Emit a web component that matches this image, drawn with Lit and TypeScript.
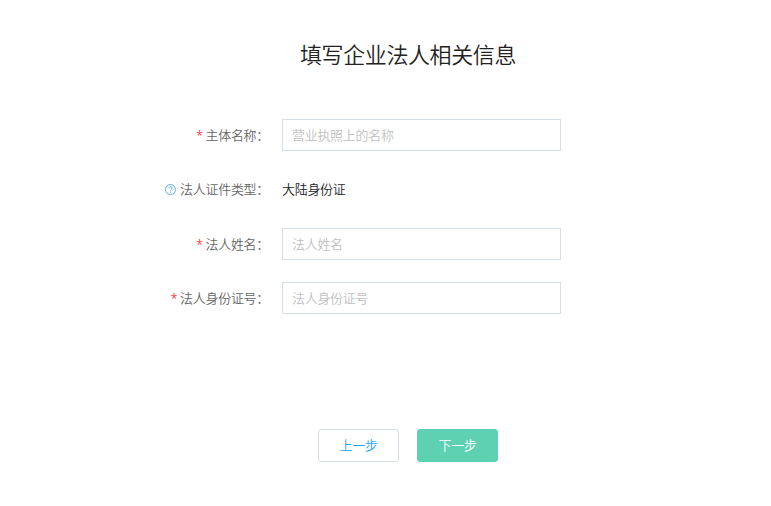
import { LitElement, html, css } from "lit";
import { customElement } from "lit/decorators.js";

@customElement("app-root")
export class AppRoot extends LitElement {
  static styles = css`
    :host { display: block; box-sizing: border-box; height: 506px; overflow: hidden; background: #fff; font: 350 13px/20px "Noto Sans CJK SC", sans-serif; color: #222; letter-spacing: -0.3px; }
    h1 { margin: 0; padding: 37px 0 0 45px; text-align: center; font-size: 22px; font-weight: 350; line-height: 32px; letter-spacing: -0.4px; }
    .form { display: grid; grid-template-columns: 282px 279px; row-gap: 22.3px; margin-top: 50px; }
    .label { display: flex; align-items: center; justify-content: flex-end; height: 32px; padding-right: 13px; color: #666; }
    .star { color: #ff3b44; margin: 1px 3px 0 0; font-family: "Open Sans", sans-serif; font-size: 12px; line-height: 17px; font-weight: 400; }
    svg { width: 11px; height: 11px; margin-right: 4px; }
    input { box-sizing: border-box; width: 279px; height: 32px; border: 1px solid #d5dfe8; border-radius: 0; padding: 0 9px 1px; font: inherit; letter-spacing: inherit; outline: none; }
    input::placeholder { color: #bfbfbf; opacity: 1; }
    .value { line-height: 32px; }
    .actions { display: flex; gap: 18px; padding: 115px 0 0 318px; }
    button { box-sizing: border-box; width: 81px; height: 33px; padding: 0 0 1px; border: 1px solid #d5dfe8; border-radius: 3px; background: #fff; color: #1fa2ff; font: inherit; letter-spacing: inherit; }
    .primary { background: #5fd1b3; border-color: #5fd1b3; color: #fff; }
  `;
  private field(text: string, placeholder: string) {
    return html`<div class="label"><span class="star">*</span><span>${text}：</span></div><input placeholder=${placeholder}>`;
  }
  render() {
    return html`<h1>填写企业法人相关信息</h1>
      <div class="form">
        ${this.field("主体名称", "营业执照上的名称")}
        <div class="label"><svg viewBox="0 0 11 11" fill="none" stroke="#4aa5ff" stroke-width=".9"><circle cx="5.5" cy="5.5" r="5"/><path d="M3.8 4.2C3.9 2.2 7.1 2.3 7.1 4.1C7.1 5.2 5.5 5.2 5.5 6.6M5.5 7.6V8.6"/></svg><span>法人证件类型：</span></div><div class="value">大陆身份证</div>
        ${this.field("法人姓名", "法人姓名")}
        ${this.field("法人身份证号", "法人身份证号")}
      </div>
      <div class="actions"><button>上一步</button><button class="primary">下一步</button></div>`;
  }
}
